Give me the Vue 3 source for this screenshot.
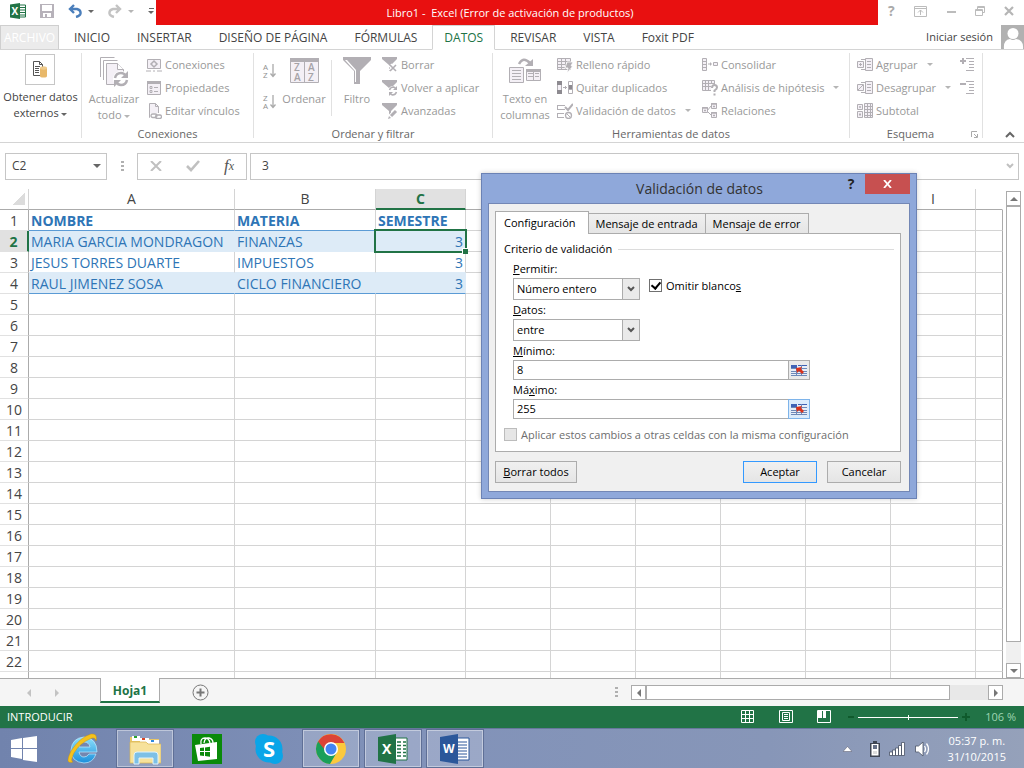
<template>
  <div class="desktop">
    <header class="titlebar">
      <div class="quick-access">
        <button class="icon-btn" aria-label="Excel"><svg width="16" height="16" viewBox="0 0 16 16" v-html="icons.excelSmall"></svg></button>
        <button class="icon-btn" aria-label="Guardar"><svg width="14" height="14" viewBox="0 0 14 14" v-html="icons.save"></svg></button>
        <button class="icon-btn" aria-label="Deshacer">
          <svg width="14" height="14" viewBox="0 0 14 14" fill="none" stroke="#4a7ebb" stroke-width="2.4"><path d="M6 1 2 5l4 4M2 5h7q4 1 3.500 4.500Q12 12 8 13" /></svg>
          <i class="caret dark"></i>
        </button>
        <button class="icon-btn" aria-label="Rehacer">
          <svg width="14" height="14" viewBox="0 0 14 14" fill="none" stroke="#c3c3c3" stroke-width="2.4"><path d="M8 1l4 4-4 4M12 5H5Q1 6 1.500 9.500 2 12 6 13" /></svg>
          <i class="caret"></i>
        </button>
        <button class="icon-btn customize" aria-label="Personalizar"><i class="bar"></i><i class="caret dark"></i></button>
      </div>
      <div class="title">Libro1 -&nbsp; Excel (Error de activación de productos)</div>
      <div class="window-buttons">
        <button class="icon-btn help" aria-label="Ayuda">?</button>
        <button class="icon-btn" aria-label="Opciones de cinta"><svg width="13" height="11" viewBox="0 0 13 11" fill="none" stroke="#bcbcbc"><path d="M.5.5h12v10H.5zM0 2.500h13M6.500 4v5M4 6.500 6.500 4 9 6.500" /></svg></button>
        <button class="icon-btn" aria-label="Minimizar"><svg width="10" height="10" viewBox="0 0 10 10"><path d="M1 5h9v2H1z" fill="#bcbcbc" /></svg></button>
        <button class="icon-btn" aria-label="Restaurar"><svg width="10" height="10" viewBox="0 0 10 10" fill="none" stroke="#bcbcbc"><path d="M2.500 3V.5h7v6H7M2 1.500h8M.5 3.500h7v6h-7zM0 4.500h8" /></svg></button>
        <button class="icon-btn" aria-label="Cerrar"><svg width="10" height="10" viewBox="0 0 10 10"><path d="m1 1 8 8M9 1 1 9" stroke="#b5b5b5" stroke-width="2.200" /></svg></button>
      </div>
    </header>

    <nav class="tabs">
      <button class="file-tab">ARCHIVO</button>
      <button v-for="tab in tabs" :key="tab" class="tab" :class="{ active: tab === activeTab }" @click="activeTab = tab">{{ tab }}</button>
      <a class="sign-in" href="#">Iniciar sesión</a>
      <svg class="avatar" width="23" height="24" viewBox="0 0 23 24"><path d="M0 0h23v24H0z" fill="#b1b1b1" /><circle cx="12" cy="8.500" r="5.500" fill="#fff" /><path d="M3 24q-1-9 6-10 3 2 6 0 8 1 7 10z" fill="#fff" /></svg>
    </nav>

    <section class="ribbon">
      <div class="group get-data">
        <button class="big enabled">
          <span class="framed"><svg width="16" height="17" viewBox="0 0 16 17" v-html="icons.getData"></svg></span>
          <span>Obtener datos</span><span>externos <i class="caret dark"></i></span>
        </button>
      </div>

      <div class="group connections">
        <div class="group-body">
          <button class="big">
            <svg width="30" height="31" viewBox="0 0 30 31" v-html="icons.refresh"></svg>
            <span>Actualizar</span><span>todo <i class="caret"></i></span>
          </button>
          <div class="stack">
            <button v-for="c in connections" :key="c.text" class="small"><svg width="16" height="16" viewBox="0 0 16 16" v-html="icons[c.icon]"></svg>{{ c.text }}</button>
          </div>
        </div>
        <div class="group-label">Conexiones</div>
      </div>

      <div class="group sorting">
        <div class="group-body">
          <div class="sort-pair">
            <button class="icon-btn" aria-label="Ordenar de A a Z"><svg width="15" height="22" viewBox="0 0 15 22" v-html="icons.sortAZ"></svg></button>
            <button class="icon-btn" aria-label="Ordenar de Z a A"><svg width="15" height="22" viewBox="0 0 15 22" v-html="icons.sortZA"></svg></button>
          </div>
          <button class="big sort">
            <svg width="29" height="31" viewBox="0 0 29 31" v-html="icons.sort"></svg><span>Ordenar</span>
          </button>
          <i class="divider"></i>
          <button class="big filter">
            <svg width="28" height="31" viewBox="0 0 28 31" v-html="icons.filter"></svg><span>Filtro</span>
          </button>
          <div class="stack">
            <button v-for="f in filters" :key="f.text" class="small"><svg width="16" height="16" viewBox="0 0 16 16" v-html="icons[f.icon]"></svg>{{ f.text }}</button>
          </div>
        </div>
        <div class="group-label">Ordenar y filtrar</div>
      </div>

      <div class="group tools">
        <div class="group-body">
          <button class="big">
            <svg width="32" height="31" viewBox="0 0 32 31" v-html="icons.textColumns"></svg>
            <span>Texto en</span><span>columnas</span>
          </button>
          <div class="stack first">
            <button v-for="t in tools" :key="t.text" class="small"><svg width="16" height="16" viewBox="0 0 16 16" v-html="icons[t.icon]"></svg>{{ t.text }}<i v-if="t.menu" class="caret"></i></button>
          </div>
          <div class="stack">
            <button v-for="t in analysis" :key="t.text" class="small"><svg width="16" height="16" viewBox="0 0 16 16" v-html="icons[t.icon]"></svg>{{ t.text }}<i v-if="t.menu" class="caret"></i></button>
          </div>
        </div>
        <div class="group-label">Herramientas de datos</div>
      </div>

      <div class="group outline">
        <div class="group-body">
          <div class="stack">
            <button v-for="o in outline" :key="o.text" class="small"><svg width="16" height="16" viewBox="0 0 16 16" v-html="icons[o.icon]"></svg>{{ o.text }}<i v-if="o.menu" class="caret"></i></button>
          </div>
          <div class="stack">
            <button class="small" aria-label="Mostrar detalle"><svg width="16" height="16" viewBox="0 0 16 16" v-html="icons.showDetail"></svg></button>
            <button class="small" aria-label="Ocultar detalle"><svg width="16" height="16" viewBox="0 0 16 16" v-html="icons.hideDetail"></svg></button>
          </div>
        </div>
        <div class="group-label">
          <span>Esquema</span>
          <svg width="7" height="7" viewBox="0 0 7 7" fill="none" stroke="#aaa"><path d="M.5 6V.5H6M3 3l3 3M6.500 3v3.500H3" /></svg>
        </div>
      </div>
      <button class="collapse" aria-label="Contraer la cinta"><svg width="10" height="7" viewBox="0 0 10 7"><path d="m1 6 4-4 4 4" fill="none" stroke="#666" stroke-width="2" /></svg></button>
    </section>

    <section class="formula-bar">
      <div class="name-box">
        <input v-model="cellName" aria-label="Cuadro de nombres" />
        <i class="caret dark"></i>
      </div>
      <i class="dots"></i>
      <div class="fx-buttons">
        <button class="icon-btn" aria-label="Cancelar"><svg width="12" height="10" viewBox="0 0 12 10"><path d="m1 0 10 10M11 0 1 10" stroke="#c0c0c0" stroke-width="2" /></svg></button>
        <button class="icon-btn" aria-label="Introducir"><svg width="14" height="12" viewBox="0 0 14 12"><path d="m1 6 4 4 8-9" fill="none" stroke="#c0c0c0" stroke-width="2.600" /></svg></button>
        <button class="icon-btn fx" aria-label="Insertar función">f<sub>x</sub></button>
      </div>
      <div class="formula">
        <input v-model="formula" aria-label="Barra de fórmulas" />
        <svg width="8" height="6" viewBox="0 0 8 6"><path d="m1 1 3 3 3-3" fill="none" stroke="#c0c0c0" stroke-width="2" /></svg>
      </div>
    </section>

    <main class="workbook">
      <div class="grid">
        <table>
          <colgroup>
            <col class="col-num" /><col class="col-a" /><col class="col-b" /><col class="col-c" />
            <col v-for="n in 6" :key="n" class="col-std" /><col />
          </colgroup>
          <thead>
            <tr>
              <th class="corner"></th>
              <th v-for="c in columns" :key="c" :class="{ current: c === 'C' }">{{ c }}</th>
              <th></th>
            </tr>
          </thead>
          <tbody>
            <tr v-for="(row, r) in rows" :key="r" :class="row.kind">
              <th :class="{ current: r === 1 }">{{ row.label }}</th>
              <td v-for="(value, c) in row.cells" :key="c" :class="{ data: c < 3, num: c === 2 && r > 0, selected: c === 2 && r === 1 }">{{ value }}</td>
            </tr>
          </tbody>
        </table>
      </div>
      <div class="vscroll">
        <button aria-label="Arriba"><i class="arrow up"></i></button>
        <div class="thumb"></div>
        <div class="track"></div>
        <button aria-label="Abajo"><i class="arrow down"></i></button>
      </div>
    </main>

    <section class="sheet-bar">
      <div class="sheet-nav">
        <button class="icon-btn" aria-label="Hoja anterior"><i class="arrow left"></i></button>
        <button class="icon-btn" aria-label="Hoja siguiente"><i class="arrow right"></i></button>
      </div>
      <button class="sheet-tab">Hoja1</button>
      <button class="icon-btn add-sheet" aria-label="Hoja nueva"><svg width="17" height="17" viewBox="0 0 17 17" fill="none" stroke="#777"><circle cx="8.500" cy="8.500" r="7.500" /><path d="M8.500 4.500v8M4.500 8.500h8" stroke-width="2" /></svg></button>
      <i class="dots"></i>
      <div class="hscroll">
        <button aria-label="Izquierda"><i class="arrow left"></i></button>
        <div class="thumb"></div>
        <div class="track"></div>
        <button aria-label="Derecha"><i class="arrow right"></i></button>
      </div>
    </section>

    <footer class="status">
      <span class="mode">INTRODUCIR</span>
      <div class="views">
        <button class="icon-btn" aria-label="Normal"><svg width="14" height="14" viewBox="0 0 14 14"><path d="M.5.5h12v12H.5zM4.500 0v13M8.500 0v13M0 4.500h13M0 8.500h13" fill="none" stroke="#fff" /></svg></button>
        <button class="icon-btn" aria-label="Diseño de página"><svg width="14" height="14" viewBox="0 0 14 14"><path d="M.5.5h13v12H.5zM3.500 2.500h7v8h-7zM5 4.500h4M5 6.500h4M5 8.500h4" fill="none" stroke="#fff" /></svg></button>
        <button class="icon-btn" aria-label="Salto de página"><svg width="14" height="14" viewBox="0 0 14 14"><path d="M.5.5h13v12H.5z" fill="none" stroke="#fff" /><path d="M1 1h4v7H1zM6 1h3v7H6z" fill="#fff" /></svg></button>
      </div>
      <button class="icon-btn zoom-step" aria-label="Alejar"><svg width="8" height="8" viewBox="0 0 8 8"><path d="M1 3h6v2H1z" fill="#0f5a2c" /></svg></button>
      <input v-model="zoom" type="range" min="0" max="100" aria-label="Zoom" />
      <button class="icon-btn zoom-step" aria-label="Acercar"><svg width="8" height="8" viewBox="0 0 8 8"><path d="M3 0h2v3h3v2H5v3H3V5H0V3h3z" fill="#0f5a2c" /></svg></button>
      <span class="percent">106 %</span>
    </footer>

    <footer class="taskbar">
      <button class="start" aria-label="Inicio"><svg width="28" height="26" viewBox="0 0 28 26" fill="#fff"><path d="M1 4l11-2v10H1zM13 2l14-2v12H13zM1 13h11v10L1 21zM13 13h14v13l-14-2z" /></svg></button>
      <button v-for="app in apps" :key="app.icon" class="app" :class="{ open: app.open }" :aria-label="app.name"><svg width="32" height="32" viewBox="0 0 32 32" v-html="icons[app.icon]"></svg></button>
      <div class="tray">
        <svg width="9" height="6" viewBox="0 0 9 6"><path d="m0 5.500 4.500-5 4.500 5z" fill="#fff" stroke="#556" stroke-width=".5" /></svg>
        <svg width="10" height="16" viewBox="0 0 10 16"><path d="M3 0h4v2h3v14H0V2h3z" fill="#3e4553" /><path d="M1.500 3h7v11.500h-7z" fill="#fff" /><path d="M3 4h4v4H3z" fill="#667087" /><path d="M3 10h4v3H3z" fill="#ddd" /></svg>
        <svg width="17" height="14" viewBox="0 0 17 14" fill="#fff" stroke="#4a5366" stroke-width=".8"><path d="M.5 10h3v3.500h-3zM3.500 8h3v5.500h-3zM6.500 6h3v7.500h-3zM9.500 3.500h3v10h-3zM12.500.5h3v13h-3z" /></svg>
        <svg width="15" height="16" viewBox="0 0 15 16"><path d="M.5 5h3L8 1v14l-4.500-4h-3z" fill="#fff" stroke="#4a5366" stroke-width=".8" /><path d="M9.500 5q2 3 0 6M11.500 2.500q4 5.500 0 11" fill="none" stroke="#fff" stroke-width="1.300" /></svg>
      </div>
      <div class="clock"><span>05:37 p. m.</span><span>31/10/2015</span></div>
    </footer>

    <div class="dialog" role="dialog" aria-labelledby="dialog-title">
      <div class="dialog-title">
        <h1 id="dialog-title">Validación de datos</h1>
        <button class="dialog-help" aria-label="Ayuda">?</button>
        <button class="dialog-close" aria-label="Cerrar"><svg width="9" height="8" viewBox="0 0 9 8"><path d="m1 0 7 8M8 0 1 8" stroke="#fff" stroke-width="1.800" /></svg></button>
      </div>
      <form class="dialog-body" @submit.prevent>
        <div class="dialog-tabs">
          <button type="button" class="active">Configuración</button>
          <button type="button">Mensaje de entrada</button>
          <button type="button">Mensaje de error</button>
        </div>
        <div class="panel">
          <div class="legend">Criterio de validación</div>
          <div class="criteria">
            <label for="allow"><u>P</u>ermitir:</label>
            <div class="allow-row">
              <div class="select">
                <select id="allow" v-model="allow"><option>Número entero</option><option>Decimal</option><option>Lista</option></select>
                <span><svg width="8" height="6" viewBox="0 0 8 6"><path d="m1 1 3 3 3-3" fill="none" stroke="#555" stroke-width="2" /></svg></span>
              </div>
              <input id="ignore-blank" v-model="ignoreBlank" type="checkbox" />
              <label for="ignore-blank">Omitir blanco<u>s</u></label>
            </div>
            <label for="data"><u>D</u>atos:</label>
            <div class="select">
              <select id="data" v-model="operator"><option>entre</option><option>no está entre</option><option>igual a</option></select>
              <span><svg width="8" height="6" viewBox="0 0 8 6"><path d="m1 1 3 3 3-3" fill="none" stroke="#555" stroke-width="2" /></svg></span>
            </div>
            <label for="min"><u>M</u>ínimo:</label>
            <div class="ref-field">
              <input id="min" v-model="min" type="text" />
              <button type="button" aria-label="Contraer mínimo"><svg width="16" height="13" viewBox="0 0 16 13" v-html="icons.picker"></svg></button>
            </div>
            <label for="max">Má<u>x</u>imo:</label>
            <div class="ref-field">
              <input id="max" v-model="max" type="text" />
              <button type="button" class="focused" aria-label="Contraer máximo"><svg width="16" height="13" viewBox="0 0 16 13" v-html="icons.picker"></svg></button>
            </div>
          </div>
          <div class="apply-row">
            <input id="apply-all" type="checkbox" disabled />
            <label for="apply-all">Aplicar estos cambios a otras celdas con la misma configuración</label>
          </div>
        </div>
        <div class="dialog-buttons">
          <button type="button" class="clear"><u>B</u>orrar todos</button>
          <button type="submit" class="accept">Aceptar</button>
          <button type="button">Cancelar</button>
        </div>
      </form>
    </div>
  </div>
</template>

<script setup>
import { ref } from 'vue';

const tabs = ['INICIO', 'INSERTAR', 'DISEÑO DE PÁGINA', 'FÓRMULAS', 'DATOS', 'REVISAR', 'VISTA', 'Foxit PDF'];
const activeTab = ref('DATOS');

const cellName = ref('C2');
const formula = ref('3');
const zoom = ref(50);

const allow = ref('Número entero');
const operator = ref('entre');
const ignoreBlank = ref(true);
const min = ref('8');
const max = ref('255');

const connections = [
  { icon: 'connections', text: 'Conexiones' },
  { icon: 'properties', text: 'Propiedades' },
  { icon: 'links', text: 'Editar vínculos' }
];

const filters = [
  { icon: 'clearFilter', text: 'Borrar' },
  { icon: 'reapply', text: 'Volver a aplicar' },
  { icon: 'advanced', text: 'Avanzadas' }
];

const tools = [
  { icon: 'flashFill', text: 'Relleno rápido' },
  { icon: 'duplicates', text: 'Quitar duplicados' },
  { icon: 'validation', text: 'Validación de datos', menu: true }
];

const analysis = [
  { icon: 'consolidate', text: 'Consolidar' },
  { icon: 'whatIf', text: 'Análisis de hipótesis', menu: true },
  { icon: 'relations', text: 'Relaciones' }
];

const outline = [
  { icon: 'groupRows', text: 'Agrupar', menu: true },
  { icon: 'ungroupRows', text: 'Desagrupar', menu: true },
  { icon: 'subtotal', text: 'Subtotal' }
];

const apps = [
  { icon: 'ie', name: 'Internet Explorer' },
  { icon: 'explorer', name: 'Explorador de archivos', open: true },
  { icon: 'store', name: 'Tienda' },
  { icon: 'skype', name: 'Skype' },
  { icon: 'chrome', name: 'Chrome', open: true },
  { icon: 'excel', name: 'Excel', open: true },
  { icon: 'word', name: 'Word', open: true }
];

const columns = ['A', 'B', 'C', 'D', 'E', 'F', 'G', 'H', 'I'];

const records = [
  ['NOMBRE', 'MATERIA', 'SEMESTRE'],
  ['MARIA GARCIA MONDRAGON', 'FINANZAS', '3'],
  ['JESUS TORRES DUARTE', 'IMPUESTOS', '3'],
  ['RAUL JIMENEZ SOSA', 'CICLO FINANCIERO', '3']
];
const kinds = ['heading', 'band', 'plain', 'band last'];

// row 23 is only partly visible, so it gets no number
const rows = Array.from({ length: 23 }, (_, r) => ({
  label: r < 22 ? r + 1 : '',
  kind: kinds[r] || '',
  cells: Array.from({ length: 10 }, (_, c) => (records[r] && records[r][c]) || '')
}));

const G = '#b2afb4';
const L = '#f4f0f6';
const funnel = `<path d="M0 0h15v2L9 8v6H7V8L0 2z" fill="${G}"/>`;
const sheet = `fill="${L}" stroke="${G}"`;
const sortArrow = '<path d="M11 4v12M8.500 13.500 11 16.500l2.500-3" fill="none" stroke="#aaa" stroke-width="1.300"/>';
const sortIcon = (top, bottom) =>
  `<g font-family="Open Sans" font-size="8" fill="#8f8f8f"><text x="1" y="10">${top}</text><text x="1" y="18">${bottom}</text></g>${sortArrow}`;

const icons = {
  excelSmall: '<path d="M9 2h6.500v12H9z" fill="#fff" stroke="#217346"/><path d="M10 4.500h5M10 7h5M10 9.500h5M10 12h5" stroke="#217346"/><path d="M0 1.500 10 0v16L0 14.500z" fill="#217346"/><text x="1.500" y="12" font-family="Open Sans" font-size="10" font-weight="700" fill="#fff">X</text>',
  save: '<path d="M0 0h14v14H0z" fill="#b7b2ba"/><path d="M2 1h10v6H2zM3 9h8v4H7v-3H5v3H3z" fill="#fff"/>',
  getData: '<path d="M1.500.5h6l3 3v11h-9z" fill="#fff" stroke="#555"/><path d="M7.500.5v3h3M3 5.500h5M3 7.500h4M3 9.500h4M3 11.500h4" fill="none" stroke="#555"/><path d="M8 7h7v8H8z" fill="#e8b86a"/><ellipse cx="11.500" cy="7" rx="3.500" ry="1.700" fill="#f0cb8c"/><ellipse cx="11.500" cy="15" rx="3.500" ry="1.500" fill="#e8b86a"/>',
  refresh: `<path d="M1.500 20V.5h14M4.500 23V3.500h14" fill="none" stroke="${G}"/><path d="M7.500 6.500h11l6 6v15h-17z" ${sheet}/><path d="M18.500 6.500v6h6" fill="#fff" stroke="${G}"/><circle cx="22" cy="22" r="8" fill="#fff"/><path d="M16 21q1-5 6-5 3 0 5 3M28 23q-1 5-6 5-3 0-5-3" fill="none" stroke="${G}" stroke-width="2.500"/><path d="M29 14v7h-7zM15 30v-7h7z" fill="${G}"/>`,
  connections: `<path d="M1.500 2.500h13v9h-13z" ${sheet}/><path d="M0 14h5M7 14h2M11 14h5" stroke="${G}"/><path d="m8 4 3 3-3 3-3-3z" fill="none" stroke="${G}" stroke-width="1.500"/>`,
  properties: `<path d="M1.500 1.500h13v13h-13z" ${sheet}/><path d="M1 1h14v3H1z" fill="${G}"/><path d="M4 6.500h2v2H4zM4 10.500h2v2H4zM8 7.500h4M8 11.500h4" fill="none" stroke="${G}"/>`,
  links: `<path d="M3.500.5h6l3 3v11h-9z" ${sheet}/><path d="M9.500.5v3h3" fill="none" stroke="${G}"/><path d="M4 10h12v6H4z" fill="#fff"/><rect x="5" y="11" width="6" height="3.500" rx="1.700" fill="none" stroke="${G}" stroke-width="1.300"/><rect x="9.500" y="12" width="6" height="3.500" rx="1.700" fill="none" stroke="${G}" stroke-width="1.300"/>`,
  sortAZ: sortIcon('A', 'Z'),
  sortZA: sortIcon('Z', 'A'),
  sort: `<path d="M.5 1.500h28v24H.5z" ${sheet}/><path d="M0 1h29v4H0z" fill="${G}"/><path d="M14.500 5v20" stroke="${G}"/><g font-family="Open Sans" font-size="10" font-weight="600" fill="#a5a2a7"><text x="4" y="14">Z</text><text x="4" y="24">A</text><text x="18" y="14">A</text><text x="18" y="24">Z</text></g>`,
  filter: `<path d="M0 0h28v3L17 14v13h-6V14L0 3z" fill="${G}"/><path d="M2 3h2l9 10v12h-1V14z" fill="#fff"/>`,
  clearFilter: `${funnel}<path d="m8 8 6 6M14 8l-6 6" stroke="#fff" stroke-width="4"/><path d="m8 8 6 6M14 8l-6 6" stroke="${G}" stroke-width="1.600"/>`,
  reapply: `${funnel}<circle cx="11" cy="11" r="5" fill="#fff"/><path d="M7.500 10q1-3 4-3l2 1M14.500 12q-1 3-4 3l-2-1" fill="none" stroke="${G}" stroke-width="1.500"/><path d="M15 6v4h-4zM7 16v-4h4z" fill="${G}"/>`,
  advanced: `${funnel}<path d="m7 15 8-8" stroke="#fff" stroke-width="5"/><path d="m9 13 5-5" stroke="${G}" stroke-width="3"/><path d="m6 16 1-3 2 2z" fill="${G}"/>`,
  textColumns: `<path d="M10 7q4-8 11-1" fill="none" stroke="${G}" stroke-width="2.500"/><path d="M24 2v7h-8z" fill="${G}"/><path d="M.5 10.500h14v15H.5zM17.500 12.500h14v11h-14z" ${sheet}/><path d="M3 13.500h9M3 16.500h9M3 19.500h9M3 22.500h9M19 16.500h5M26 16.500h4M19 19.500h5M26 19.500h4M24.500 12v11" stroke="${G}"/><path d="M17 12h15v3H17z" fill="${G}"/>`,
  flashFill: `<path d="M.5 1.500h13v11H.5zM1 4.500h13M1 7.500h13M1 10.500h13M4.500 2v11M8.500 2v11" ${sheet}/><path d="M10 5h6l-2 4h2l-6 7 1-5H8z" fill="${G}" stroke="#fff" stroke-width=".8"/>`,
  duplicates: `<path d="M.5 1.500h4v12h-4z" ${sheet}/><path d="M0 1h5v4H0zM0 10h5v4H0zM11 5h5v4h-5z" fill="#8d8a90"/><path d="M11.500 1.500h4v12h-4zM11 9.500h5" fill="none" stroke="${G}"/><path d="M6 7.500h4M8.500 6v3" stroke="${G}"/>`,
  validation: `<path d="M0 2.500h8M0 6.500h8M.5 2v5M0 10.500h7M0 14.500h7M.5 10v5" stroke="${G}"/><path d="m8 4 3 3 5-6" fill="none" stroke="${G}" stroke-width="2"/><circle cx="11.500" cy="12.500" r="3" fill="#fff" stroke="${G}" stroke-width="1.300"/><path d="m9.500 10.500 4 4" stroke="${G}"/>`,
  consolidate: `<path d="M.5 1.500h4v12h-4zM0 4.500h5M0 7.500h5M0 10.500h5M11.500 5.500h4v3h-4z" ${sheet}/><path d="M6 7h4M8.500 5.500v3" stroke="${G}"/>`,
  whatIf: `<path d="M.5.5h12v10H.5zM0 3.500h13M0 6.500h13M3.500 0v11M6.500 0v11M9.500 0v11" ${sheet}/><path d="M9 4h7v12H9z" fill="#fff"/><path d="M10 8q0-3 2.500-3T15 7.500q0 1.500-2.500 3v1.500M12.500 13.500v2" fill="none" stroke="${G}" stroke-width="2"/>`,
  relations: `<path d="M5 8l4-5M5 8l4 4" stroke="${G}"/><path d="M.5 4.500h5v5h-5zM9.500.5h5v5h-5zM9.500 9.500h5v5h-5z" ${sheet}/><path d="M0 5h6M9 1h6M9 10h6M11 3.500h2M2 7.500h2M11 12.500h2" stroke="${G}" stroke-width="1.500"/>`,
  groupRows: `<path d="M.5 4.500h6v6h-6zM8.500 1.500h7v12h-7z" ${sheet}/><path d="M2 7.500h3M3.500 6v3M4 2.500h4M4 12.500h4M10 4.500h4M10 7.500h4M10 10.500h4" stroke="${G}"/>`,
  ungroupRows: `<path d="M.5 4.500h6v6h-6zM8.500 1.500h7v12h-7z" ${sheet}/><path d="m1 10 5-5M4 2.500h4M4 12.500h4M10 4.500h4M10 7.500h4M10 10.500h4" stroke="${G}"/>`,
  subtotal: `<path d="M.5 1.500h5v5h-5zM.5 8.500h5v6h-5zM7.500 .5h8v14h-8zM7 3.500h9M7 6.500h9M7 9.500h9M7 12.500h9M10.500 0v15M13.500 0v15" ${sheet}/><path d="M2 4h2M2 11.500h2M3 10v3M3 3v2" stroke="${G}"/>`,
  showDetail: `<path d="M1 4h6M4 1v6" stroke="${G}" stroke-width="2"/><path d="M7 1.500h8M10 4.500h5M10 7.500h5M10 10.500h5M7 13.500h8" stroke="${G}"/>`,
  hideDetail: `<path d="M1 4h6" stroke="${G}" stroke-width="2"/><path d="M7 1.500h8M10 4.500h5M10 7.500h5M10 10.500h5M7 13.500h8" stroke="${G}"/>`,
  picker: '<path d="M0 1h16v11H0z" fill="#e9eef8"/><path d="M0 1h6v3H0zM7 1h9v1H7z" fill="#3f62b5"/><path d="M0 4.500h16M0 7.500h16M0 9.500h16M0 11.500h16M5.500 4v8M10.500 1v11" stroke="#6d89b8"/><path d="M5 4l6-1-1 2 3 3-2 2-3-3-2 2z" fill="#d9321b"/>',
  ie: '<defs><linearGradient id="ieBlue" x1="0" y1="0" x2="0" y2="1"><stop offset="0" stop-color="#8ee0fb"/><stop offset="1" stop-color="#1b8fdc"/></linearGradient></defs><path d="M30 19H12q1 5 5 5 3 0 5-3h7q-3 9-12 9-13-1-13-13Q5 5 17 4q13 1 13 15zM23 14q-1-5-6-5t-5 5z" fill="url(#ieBlue)" stroke="#bfeaff" stroke-width=".7"/><path d="M6 29Q-3 32 4 18 13 4 24 1q7-1 5 7-1-5-6-2Q13 10 7 20q-4 8-1 9z" fill="#f5c21d" stroke="#c28b0c" stroke-width=".4"/>',
  explorer: '<path d="M1 4h9l2 2h18v22H1z" fill="#e9c767"/><path d="M3 3h8v5H3z" fill="#fff"/><path d="M5 3h3v2H5z" fill="#29a12f"/><path d="M11 5h9v5h-9z" fill="#fff"/><path d="M13 5h3v2h-3z" fill="#d94425"/><path d="M19 7h11v4H19z" fill="#fff"/><path d="M22 7h3v2h-3z" fill="#2f8ae0"/><path d="M1 9h16l2 2h13v19H1z" fill="#f7e29b" stroke="#d9b651" stroke-width=".7"/><path d="M5 31V22q0-3 3-3h18q3 0 3 3v9h-5v-6H10v6z" fill="#7dc0e6" stroke="#dff3fd"/>',
  store: '<path d="M1 1h30v30H1z" fill="#0a8a0a"/><path d="M4 12l22-3v17L7 28z" fill="#fff"/><path d="M10 11Q9 5 14 5q4 0 5 5M13 10q1-6 5-5 4 1 4 5" fill="none" stroke="#fff" stroke-width="1.300"/><path d="m9 15 4-.5V18H9zM14 14.400l5-.6V18h-5zM9 19h4v4l-4-.5zM14 19h5v4.700l-5-.6z" fill="#0a8a0a"/>',
  skype: '<circle cx="16" cy="16" r="13.500" fill="#0aa5e8"/><circle cx="10" cy="9" r="8" fill="#0aa5e8"/><circle cx="22" cy="23" r="8" fill="#0aa5e8"/><text x="16" y="24" text-anchor="middle" font-family="Open Sans" font-size="22" font-weight="700" fill="#fff">S</text>',
  chrome: '<circle cx="16" cy="16" r="15" fill="#fbc93d"/><path d="M16 16 3 8.500A15 15 0 0 1 29.500 10H16z" fill="#dc4437"/><path d="M3 8.500A15 15 0 0 0 15 31l7-12-6-3z" fill="#1a9f5b"/><path d="M3 8.500 9.500 20 16 16z" fill="#1a9f5b"/><path d="M3 8.500 10 17l6-7z" fill="#dc4437"/><circle cx="16" cy="16" r="7" fill="#fff"/><circle cx="16" cy="16" r="5.500" fill="#4385f4"/>',
  excel: '<path d="M18 5h12v22H18z" fill="#fff" stroke="#217346"/><path d="M20 9h4M26 9h3M20 12.500h4M26 12.500h3M20 16h4M26 16h3M20 19.500h4M26 19.500h3M20 23h4M26 23h3" stroke="#217346" stroke-width="1.600"/><path d="M1 4 19 1v30L1 28z" fill="#217346"/><text x="5" y="21" font-family="Open Sans" font-size="14" font-weight="700" fill="#fff">X</text>',
  word: '<path d="M18 5h12v22H18z" fill="#fff" stroke="#2b579a"/><path d="M19 9h9M19 12h9M19 15h9M19 18h9M19 21h9M19 24h9" stroke="#2b579a"/><path d="M1 4 19 1v30L1 28z" fill="#2b579a"/><text x="4" y="20" font-family="Open Sans" font-size="12" font-weight="700" fill="#fff">W</text>'
};
</script>

<style>
body {
  margin: 0;
  overflow: hidden;
}
</style>

<style scoped>
.desktop {
  position: relative;
  display: flex;
  flex-direction: column;
  height: 100vh;
  background: #fff;
  color: #444;
  font-family: "Open Sans", "Noto Sans", sans-serif;
  font-size: 11px;
  line-height: 16px;
}

* {
  box-sizing: border-box;
}

button,
input,
select {
  margin: 0;
  padding: 0;
  border: 0;
  background: none;
  color: inherit;
  font: inherit;
  outline: none;
}

svg {
  display: block;
  flex-shrink: 0;
}

.icon-btn {
  display: flex;
  align-items: center;
  justify-content: center;
}

.caret {
  display: inline-block;
  flex-shrink: 0;
  border: 3px solid transparent;
  border-top-color: #b5b5b5;
  border-bottom: 0;
  vertical-align: middle;
}

.caret.dark {
  border-top-color: #666;
}

/* title bar */
.titlebar {
  display: flex;
  flex: 0 0 25px;
}

.quick-access {
  display: flex;
  align-items: center;
  flex: 0 0 156px;
  padding-left: 10px;
  padding-bottom: 3px;
}

.quick-access .icon-btn + .icon-btn {
  margin-left: 14px;
}

.quick-access .caret {
  margin-left: 6px;
}

.quick-access .customize {
  flex-direction: column;
  gap: 2px;
}

.quick-access .customize .caret {
  margin: 0;
}

.customize .bar {
  width: 5px;
  height: 1px;
  background: #666;
}

.title {
  flex: 1;
  padding-right: 14px;
  background: #e81010;
  color: #fff;
  line-height: 25px;
  text-align: center;
}

.window-buttons {
  display: flex;
  align-items: center;
  justify-content: space-between;
  flex: 0 0 146px;
  padding: 0 10px 3px;
}

.help {
  color: #aaa;
  font-size: 14px;
  font-weight: 700;
}

/* ribbon tabs */
.tabs {
  display: flex;
  flex: 0 0 25px;
  gap: 3px;
  border-bottom: 1px solid #d4d4d4;
}

.file-tab {
  flex: 0 0 59px;
  border: 1px solid #cfcfcf;
  border-bottom: 0;
  background: #ebebeb;
  color: #fff;
  font-size: 12px;
}

/* the active tab covers the line under the strip */
.tab {
  height: 25px;
  margin-bottom: -1px;
  padding: 0 11px;
  border: 1px solid transparent;
  font-size: 12px;
  white-space: nowrap;
}

.tab.active {
  border-color: #d4d4d4;
  border-bottom-color: #fff;
  background: #fff;
  color: #217346;
}

.sign-in {
  margin-left: auto;
  color: #444;
  line-height: 24px;
  text-decoration: none;
  white-space: nowrap;
}

.avatar {
  margin-left: 5px;
}

/* ribbon */
.ribbon {
  display: flex;
  flex: 0 0 93px;
  padding: 3px 0 4px;
  border-bottom: 1px solid #d4d4d4;
  color: #999;
  white-space: nowrap;
}

.group {
  display: flex;
  flex-direction: column;
  justify-content: space-between;
  border-right: 1px solid #e1e1e1;
}

.get-data {
  flex: 0 0 82px;
  align-items: center;
}

.connections {
  flex: 0 0 172px;
}

.sorting {
  flex: 0 0 239px;
}

.tools {
  flex: 0 0 357px;
}

.outline {
  flex: 0 0 133px;
}

.group-body {
  display: flex;
}

.group-label {
  height: 16px;
  margin-bottom: -4px;
  color: #666;
  text-align: center;
}

.big {
  display: flex;
  flex-direction: column;
  align-items: center;
  padding-top: 4px;
}

.big svg {
  margin-bottom: 3px;
}

.big.enabled {
  padding-top: 1px;
  color: #444;
}

.framed {
  padding: 6px;
  margin-bottom: 4px;
  border: 1px solid #c6c6c6;
}

.framed svg {
  margin: 0;
}

.connections .big {
  width: 64px;
}

.tools .big {
  width: 64px;
}

.sort {
  width: 54px;
}

.filter {
  width: 50px;
}

.divider {
  width: 1px;
  height: 56px;
  margin-top: 7px;
  background: #e1e1e1;
}

.sort-pair {
  display: flex;
  flex-direction: column;
  gap: 9px;
  padding: 7px 0 0 8px;
}

.stack {
  display: flex;
  flex-direction: column;
}

.tools .first {
  width: 145px;
}

.small {
  display: flex;
  align-items: center;
  gap: 3px;
  height: 23px;
}

.small .caret {
  margin-left: 6px;
}

.outline .group-body {
  justify-content: space-between;
  padding: 0 7px;
}

.outline .group-label {
  display: flex;
  align-items: center;
  padding-right: 4px;
}

.outline .group-label span {
  flex: 1;
}

.collapse {
  margin: auto 9px 0 auto;
}

/* formula bar */
.formula-bar {
  display: flex;
  flex: 0 0 46px;
  align-items: center;
  padding: 0 5px;
}

.name-box,
.fx-buttons,
.formula {
  display: flex;
  align-items: center;
  min-width: 0;
  height: 27px;
  border: 1px solid #c6c6c6;
}

.name-box {
  flex: 0 0 102px;
  padding: 0 5px 0 6px;
}

.name-box input,
.formula input {
  flex: 1;
  min-width: 0;
  font-size: 12px;
}

.name-box .caret {
  border-width: 4px 4px 0;
}

.dots {
  width: 3px;
  height: 11px;
  margin: 0 13px 0 14px;
  background: repeating-linear-gradient(#b0b0b0 0 2px, transparent 2px 4px);
}

.fx-buttons {
  flex: 0 0 110px;
  justify-content: space-between;
  padding: 0 12px;
}

.fx {
  color: #555;
  font-family: "Liberation Serif", serif;
  font-size: 17px;
  font-style: italic;
}

.fx sub {
  font-size: 12px;
}

.formula {
  flex: 1;
  margin-left: 3px;
  padding: 0 4px 0 11px;
}

/* sheet */
.workbook {
  display: flex;
  flex: 1 1 0;
  min-height: 0;
}

.grid {
  flex: 1;
  overflow: hidden;
}

table {
  width: 100%;
  border-spacing: 0;
  table-layout: fixed;
}

.col-num {
  width: 29px;
}

.col-a {
  width: 206px;
}

.col-b {
  width: 141px;
}

.col-c {
  width: 90px;
}

.col-std {
  width: 85px;
}

th,
td {
  height: 21px;
  padding: 2px 2px 0;
  border-right: 1px solid #d4d4d4;
  border-bottom: 1px solid #d4d4d4;
  font-size: 14px;
  font-weight: 400;
  line-height: 18px;
  white-space: nowrap;
}

th {
  text-align: center;
}

thead th {
  padding: 0;
  border-bottom-color: #ababab;
  line-height: 20px;
}

tbody th {
  border-right-color: #ababab;
  border-bottom-color: #e1e1e1;
}

td:last-child {
  border-right-color: #ababab;
}

thead th:last-child {
  border-right-color: transparent;
}

.corner {
  background: linear-gradient(135deg, transparent 50%, #dcdcdc 50%) 12px 3px / 13px 13px no-repeat;
}

th.current {
  background: #e1e1e1;
  color: #217346;
  font-weight: 700;
}

thead .current {
  border-bottom: 2px solid #217346;
  line-height: 19px;
}

tbody .current {
  border-right: 2px solid #217346;
}

.data {
  color: #2e75b6;
}

.heading .data {
  border-bottom-color: #5b9bd5;
  font-weight: 700;
}

.band .data {
  border-color: #ddebf7;
  background: #ddebf7;
}

.plain .data {
  border-bottom-color: #ddebf7;
}

.last .data {
  border-bottom-color: #5b9bd5;
}

.num {
  text-align: right;
}

.selected {
  position: relative;
}

.selected::before {
  content: "";
  position: absolute;
  inset: -2px;
  border: 2px solid #217346;
}

.selected::after {
  content: "";
  position: absolute;
  right: -3px;
  bottom: -3px;
  width: 5px;
  height: 5px;
  border: solid #fff;
  border-width: 1px 0 0 1px;
  background: #217346;
}

.vscroll {
  display: flex;
  flex-direction: column;
  flex: 0 0 21px;
  padding: 2px 3px 0;
}

.vscroll button,
.hscroll button {
  display: flex;
  align-items: center;
  justify-content: center;
  flex: 0 0 15px;
  border: 1px solid #ababab;
  background: #fff;
}

.thumb {
  border: 1px solid #ababab;
  background: #fff;
}

.track {
  background: #f0f0f0;
}

.vscroll .thumb {
  flex: 438;
}

.vscroll .track {
  flex: 21;
}

.arrow {
  border: 4px solid transparent;
}

.arrow.up {
  border-top: 0;
  border-bottom-color: #777;
}

.arrow.down {
  border-bottom: 0;
  border-top-color: #777;
}

.arrow.left {
  border-left: 0;
  border-right-color: #777;
}

.arrow.right {
  border-right: 0;
  border-left-color: #777;
}

.sheet-bar {
  display: flex;
  align-items: center;
  flex: 0 0 28px;
  padding-right: 21px;
  border-top: 1px solid #ababab;
  background: #f5f5f5;
}

.sheet-nav {
  display: flex;
  flex: 0 0 100px;
  gap: 24px;
  padding-left: 27px;
}

.sheet-nav .left {
  border-right-color: #c3c3c3;
}

.sheet-nav .right {
  border-left-color: #c3c3c3;
}

.sheet-tab {
  align-self: flex-start;
  width: 60px;
  height: 25px;
  margin-top: -1px;
  padding-top: 2px;
  border: solid #ababab;
  border-width: 0 1px 2px;
  border-bottom-color: #217346;
  background: #fff;
  color: #217346;
  font-size: 12px;
  font-weight: 700;
}

.add-sheet {
  margin-left: 32px;
}

.sheet-bar .dots {
  margin-left: auto;
}

.hscroll {
  display: flex;
  flex: 0 1 372px;
  height: 15px;
}

.hscroll .thumb {
  flex: 304;
}

.hscroll .track {
  flex: 38;
  background: #e8e8e8;
}

/* status bar */
.status {
  display: flex;
  align-items: center;
  flex: 0 0 22px;
  padding: 0 8px 0 7px;
  background: #217346;
  color: #fff;
}

.views {
  display: flex;
  gap: 24px;
  margin-left: auto;
}

.views + .zoom-step {
  margin-left: 16px;
}

.status input {
  width: 100px;
  height: 12px;
  margin: 0 4px 0 3px;
  appearance: none;
  background: linear-gradient(#fff, #fff) center / 100% 1px no-repeat;
}

.status input::-webkit-slider-thumb {
  appearance: none;
  width: 1px;
  height: 5px;
  background: #fff;
}

.percent {
  margin-left: 15px;
  color: #9fd5b2;
}

/* taskbar */
.taskbar {
  display: flex;
  flex: 0 0 40px;
  gap: 4px;
  background: linear-gradient(90deg, #7183ad, #8192b9 40%, #8796b8 75%, #95a1ba);
  border-top: 1px solid #66779c;
}

.taskbar button {
  display: flex;
  align-items: center;
  justify-content: center;
}

.start {
  width: 50px;
}

.start svg {
  margin-right: 2px;
}

.app {
  width: 58px;
  border: 1px solid transparent;
}

.app.open {
  border-color: #5f6f96;
  background: rgba(255, 255, 255, 0.2);
  box-shadow: inset 0 0 0 1px rgba(255, 255, 255, 0.4);
}

.tray {
  display: flex;
  align-items: center;
  gap: 9px;
  margin-left: auto;
}

.tray svg:first-child {
  margin-right: 9px;
}

.clock {
  display: flex;
  flex-direction: column;
  align-items: center;
  justify-content: center;
  margin: 0 18px 0 14px;
  color: #fff;
}

/* data validation dialog */
.dialog {
  position: absolute;
  top: 173px;
  left: 481px;
  width: 436px;
  padding: 0 6px 6px;
  border: 1px solid #6b82b5;
  background: #8fa8da;
  box-shadow: 0 0 5px rgba(0, 0, 0, 0.2);
  color: #000;
}

.dialog-title {
  display: flex;
  align-items: flex-start;
  justify-content: flex-end;
  height: 29px;
}

.dialog-title h1 {
  flex: 1;
  margin: 0;
  padding-left: 74px;
  color: #333;
  font-size: 14px;
  font-weight: 400;
  line-height: 29px;
  text-align: center;
}

.dialog-help {
  width: 28px;
  color: #222;
  font-size: 14px;
  font-weight: 700;
  line-height: 20px;
}

.dialog-close {
  display: flex;
  align-items: center;
  justify-content: center;
  width: 45px;
  height: 20px;
  background: #c75050;
}

.dialog-body {
  padding: 7px 8px 8px 6px;
  border: 1px solid #7387b5;
  background: #f0f0f0;
}

.dialog-tabs {
  display: flex;
  align-items: flex-end;
}

.dialog-tabs button {
  height: 20px;
  margin-left: -1px;
  padding: 0 7px;
  border: 1px solid #acacac;
  border-bottom: 0;
  background: linear-gradient(#f0f0f0, #e5e5e5);
  white-space: nowrap;
}

.dialog-tabs .active {
  position: relative;
  height: 23px;
  margin: 0 0 -1px;
  padding: 0 12px 0 8px;
  background: #fff;
}

.panel {
  padding: 7px 6px 8px 8px;
  border: 1px solid #acacac;
  background: #fff;
}

.legend {
  display: flex;
  align-items: center;
  gap: 6px;
}

.legend::after {
  content: "";
  flex: 1;
  height: 1px;
  background: #dcdcdc;
}

.criteria {
  display: flex;
  flex-direction: column;
  align-items: flex-start;
  padding: 2px 0 0 9px;
}

.criteria > label {
  margin-top: 2px;
  padding-bottom: 1px;
}

.allow-row {
  display: flex;
}

.allow-row label,
.apply-row label {
  margin-left: 4px;
}

.select {
  position: relative;
}

.select select {
  display: block;
  width: 127px;
  height: 22px;
  padding-left: 3px;
  border: 1px solid #acacac;
  background: #fff;
  appearance: none;
}

.select span {
  position: absolute;
  top: 0;
  right: 0;
  display: flex;
  align-items: center;
  justify-content: center;
  width: 18px;
  height: 22px;
  border: 1px solid #acacac;
  background: #eaeaea;
  pointer-events: none;
}

input[type="checkbox"] {
  width: 13px;
  height: 13px;
  margin-top: 1px;
  border: 1px solid #707070;
  appearance: none;
}

.allow-row input {
  margin-left: 9px;
}

input[type="checkbox"]:checked::before {
  content: "";
  display: block;
  width: 4px;
  height: 7px;
  margin: 0 0 0 3px;
  border: solid #000;
  border-width: 0 2px 2px 0;
  transform: rotate(40deg);
}

input[type="checkbox"]:disabled {
  border-color: #bcbcbc;
  background: #e6e6e6;
}

.ref-field {
  display: flex;
  width: 297px;
  height: 20px;
  border: 1px solid #acacac;
}

.ref-field input {
  flex: 1;
  min-width: 0;
  padding-left: 3px;
}

.ref-field button {
  display: flex;
  align-items: center;
  justify-content: center;
  width: 22px;
  margin: -1px;
  border: 1px solid #acacac;
  background: #eaeaea;
}

.ref-field .focused {
  border-color: #7eb4ea;
  background: #dcecfc;
}

.apply-row {
  display: flex;
  margin-top: 8px;
  color: #6d6d6d;
  white-space: nowrap;
}

.dialog-buttons {
  display: flex;
  justify-content: flex-end;
  gap: 10px;
  margin-top: 9px;
}

.dialog-buttons button {
  width: 74px;
  height: 22px;
  border: 1px solid #acacac;
  background: linear-gradient(#f0f0f0, #e5e5e5);
}

.dialog-buttons .clear {
  width: 82px;
  margin-right: auto;
}

.dialog-buttons .accept {
  border-color: #3399ff;
}
</style>
